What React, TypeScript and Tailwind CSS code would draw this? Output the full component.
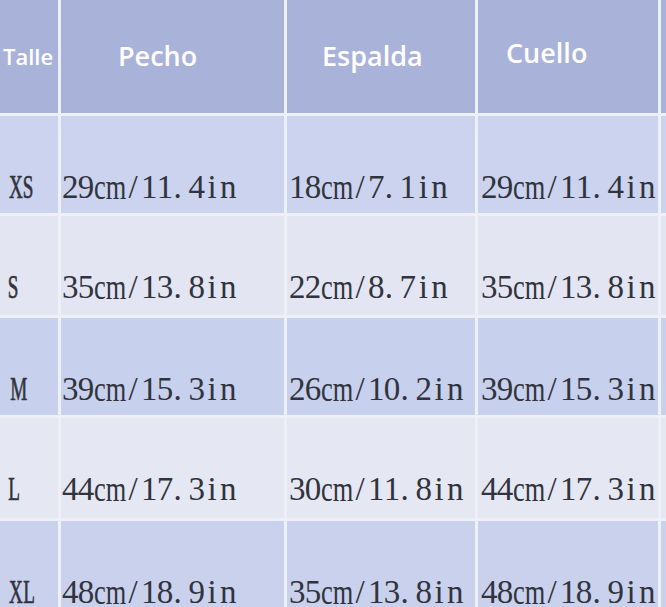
const headers = [
	{ label: 'Talle', cls: 'pl-[3px] text-[22px]' },
	{ label: 'Pecho', cls: 'pl-[57px] text-[27px]' },
	{ label: 'Espalda', cls: 'pl-[35px] text-[27px]' },
	{ label: 'Cuello', cls: 'pl-[28px] pb-[7px] text-[27px]' },
];

interface SizeRow {
	size: string;
	pecho: string;
	espalda: string;
	cuello: string;
	bg: string;
}

const rows: SizeRow[] = [
	{ size: 'XS', pecho: '29cm/11.4in', espalda: '18cm/7.1in', cuello: '29cm/11.4in', bg: 'bg-[#cbd3ee]' },
	{ size: 'S', pecho: '35cm/13.8in', espalda: '22cm/8.7in', cuello: '35cm/13.8in', bg: 'bg-[#e3e6f2]' },
	{ size: 'M', pecho: '39cm/15.3in', espalda: '26cm/10.2in', cuello: '39cm/15.3in', bg: 'bg-[#c7d0ec]' },
	{ size: 'L', pecho: '44cm/17.3in', espalda: '30cm/11.8in', cuello: '44cm/17.3in', bg: 'bg-[#e5e8f3]' },
	{ size: 'XL', pecho: '48cm/18.9in', espalda: '35cm/13.8in', cuello: '48cm/18.9in', bg: 'bg-[#c9d1ed]' },
];

// half-width serif look: each character gets a fixed cell, "cm" shares two cells
function MonoText({ text }: { text: string }) {
	const tokens = text.split(/(cm)/).flatMap((part) => (part === 'cm' ? ['cm'] : part.split('')));
	return (
		<span className="inline-flex">
			{tokens.map((tok, i) =>
				tok === 'cm' ? (
					<span key={i} className="inline-block w-[31.6px] text-left">
						<span className="inline-block origin-left scale-x-[0.8] scale-y-[1.06]">cm</span>
					</span>
				) : (
					<span
						key={i}
						className={`inline-block w-[15.8px] ${tok === '.' ? 'text-left pl-[1px]' : 'text-center'}`}
					>
						{tok}
					</span>
				),
			)}
		</span>
	);
}

function SizeLabel({ text }: { text: string }) {
	return (
		<span className="inline-flex">
			{text.split('').map((ch, i) => (
				<span key={i} className="inline-block w-[14.5px] text-center">
					<span className="inline-block scale-x-[0.58] [-webkit-text-stroke:0.7px_#33363f]">{ch}</span>
				</span>
			))}
		</span>
	);
}

const cellText =
	"pt-[55px] font-['Liberation_Serif',serif] text-[33px] leading-[33px] text-[#31343d] whitespace-nowrap overflow-hidden";

export default function App() {
	return (
		<div className="w-[666px] h-[607px] overflow-hidden bg-[#edf0f7]">
			<div className="grid grid-cols-[58px_223px_188px_180px_1fr] grid-rows-[113px_97px_99px_97px_100px_100px] gap-[3px]">
				{headers.map((h) => (
					<div
						key={h.label}
						className={`flex items-center bg-[#a9b2d8] text-white font-semibold font-['Open_Sans',sans-serif] whitespace-nowrap overflow-hidden ${h.cls}`}
					>
						{h.label}
					</div>
				))}
				<div className="bg-[#a9b2d8]" />

				{rows.map((r) => (
					<div key={r.size} className="contents">
						<div className={`${cellText} ${r.bg} pl-[4px]`}>
							<SizeLabel text={r.size} />
						</div>
						<div className={`${cellText} ${r.bg} pl-[1px]`}>
							<MonoText text={r.pecho} />
						</div>
						<div className={`${cellText} ${r.bg} pl-[2px]`}>
							<MonoText text={r.espalda} />
						</div>
						<div className={`${cellText} ${r.bg} pl-[3px]`}>
							<MonoText text={r.cuello} />
						</div>
						<div className={r.bg} />
					</div>
				))}
			</div>
		</div>
	);
}
